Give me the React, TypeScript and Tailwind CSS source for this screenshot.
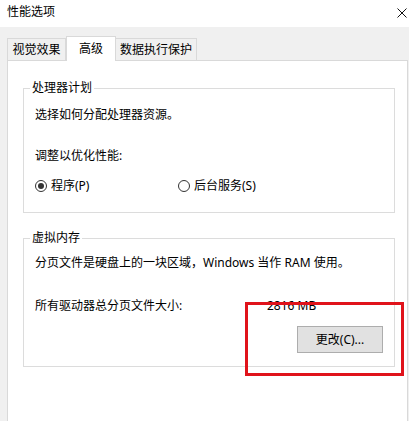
import React from "react";

function Radio({ checked }: { checked: boolean }) {
  return (
    <span className="flex h-[12px] w-[12px] items-center justify-center rounded-full border border-[#333333] bg-white">
      {checked && <span className="h-[6px] w-[6px] rounded-full bg-[#333333]" />}
    </span>
  );
}

function Group({ label, className, children }: { label: string; className?: string; children: React.ReactNode }) {
  return (
    <fieldset className={`w-[372px] border border-[#dcdcdc] ${className ?? ""}`}>
      <legend className="ml-[6px] px-[2px] leading-[16px]">{label}</legend>
      {children}
    </fieldset>
  );
}

export default function App() {
  return (
    <div
      className="relative h-[421px] w-[409px] overflow-hidden bg-[#f0f0f0] text-[12px] text-black"
      style={{ fontFamily: '"Noto Sans", "Noto Sans CJK SC", sans-serif' }}
    >
      {/* title bar */}
      <div className="flex h-[27px] items-start justify-between bg-white pl-[7px] pr-[2px] pt-[4px]">
        <span className="leading-[16px]">性能选项</span>
        <svg width="10" height="10" viewBox="0 0 10 10" className="mt-[4px]">
          <path d="M0.5 0.5 L9.5 9.5 M9.5 0.5 L0.5 9.5" stroke="#111" strokeWidth="1" />
        </svg>
      </div>

      {/* tabs */}
      <div className="mt-[9px] flex h-[24px] items-end pl-[7px]">
        <div className="flex h-[22px] w-[59px] items-center justify-center border border-b-0 border-[#d9d9d9] bg-[#f0f0f0] leading-[16px]">
          视觉效果
        </div>
        <div className="relative z-10 -mb-px flex h-[25px] w-[50px] items-center justify-center border border-b-0 border-[#d9d9d9] bg-white pb-[1px] leading-[16px]">
          高级
        </div>
        <div className="flex h-[22px] w-[81px] items-center justify-center border border-b-0 border-l-0 border-[#d9d9d9] bg-[#f0f0f0] leading-[16px]">
          数据执行保护
        </div>
      </div>

      {/* panel */}
      <div className="ml-[7px] h-[400px] w-[401px] border border-[#d9d9d9] bg-white px-[15px] pt-[19px]">
        <Group label="处理器计划">
          <div className="px-[11px] pb-[18px]">
            <div className="mt-[11px] leading-[16px]">选择如何分配处理器资源。</div>
            <div className="mt-[25px] leading-[16px]">调整以优化性能:</div>
            <div className="mt-[14px] flex h-[16px] items-center">
              <div className="flex w-[143px] items-center gap-[4px]">
                <Radio checked />
                <span className="leading-[16px]">程序(P)</span>
              </div>
              <div className="flex items-center gap-[4px]">
                <Radio checked={false} />
                <span className="leading-[16px]">后台服务(S)</span>
              </div>
            </div>
          </div>
        </Group>

        <Group label="虚拟内存" className="mt-[17px]">
          <div className="px-[11px] pb-[13px]">
            <div className="mt-[9px] leading-[16px]">分页文件是硬盘上的一块区域，Windows 当作 RAM 使用。</div>
            <div className="mt-[27px] flex leading-[16px]">
              <span className="w-[232px]">所有驱动器总分页文件大小:</span>
              <span>2816 MB</span>
            </div>
            <div className="mt-[12px] flex justify-end">
              <button className="flex h-[27px] w-[86px] items-center justify-center border border-[#adadad] bg-[#e1e1e1] leading-[16px]">
                更改(C)...
              </button>
            </div>
          </div>
        </Group>
      </div>

      {/* red highlight */}
      <div className="absolute left-[245px] top-[302px] h-[74px] w-[159px] border-[3px] border-[#e0131b]" />
    </div>
  );
}
